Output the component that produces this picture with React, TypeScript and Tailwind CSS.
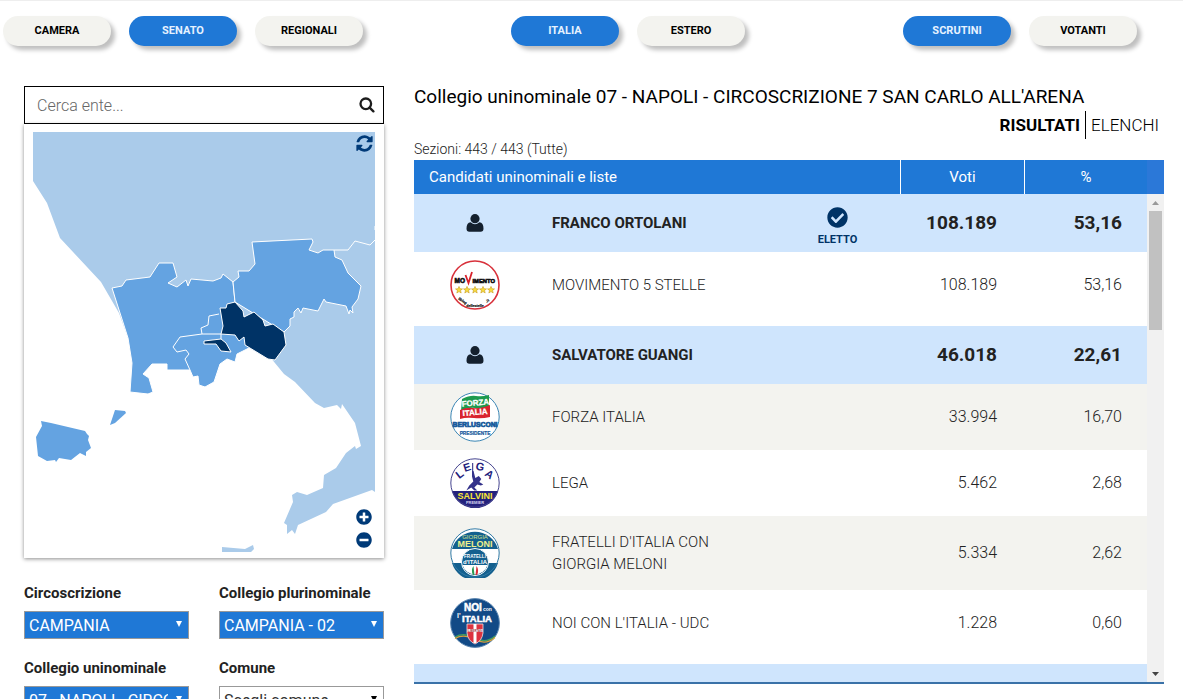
import { FaCheckCircle, FaMinusCircle, FaPlusCircle } from 'react-icons/fa';
import clsx from 'clsx';

const navGroups = [
  { name: 'Elezione', items: ['CAMERA', 'SENATO', 'REGIONALI'], active: 'SENATO' },
  { name: 'Area', items: ['ITALIA', 'ESTERO'], active: 'ITALIA' },
  { name: 'Dati', items: ['SCRUTINI', 'VOTANTI'], active: 'SCRUTINI' },
];

const filters = [
  { id: 'circoscrizione', label: 'Circoscrizione', value: 'CAMPANIA', filled: true },
  { id: 'plurinominale', label: 'Collegio plurinominale', value: 'CAMPANIA - 02', filled: true },
  { id: 'uninominale', label: 'Collegio uninominale', value: "07 - NAPOLI - CIRCOSCRIZIONE 7 SAN CARLO ALL'ARENA", filled: true },
  { id: 'comune', label: 'Comune', value: 'Scegli comune...', filled: false },
];

const candidates = [
  {
    name: 'FRANCO ORTOLANI',
    votes: '108.189',
    percent: '53,16',
    elected: true,
    lists: [{ name: 'MOVIMENTO 5 STELLE', votes: '108.189', percent: '53,16', Logo: MovimentoLogo }],
  },
  {
    name: 'SALVATORE GUANGI',
    votes: '46.018',
    percent: '22,61',
    elected: false,
    lists: [
      { name: 'FORZA ITALIA', votes: '33.994', percent: '16,70', Logo: ForzaItaliaLogo },
      { name: 'LEGA', votes: '5.462', percent: '2,68', Logo: LegaLogo },
      { name: "FRATELLI D'ITALIA CON GIORGIA MELONI", votes: '5.334', percent: '2,62', Logo: FratelliLogo },
      { name: "NOI CON L'ITALIA - UDC", votes: '1.228', percent: '0,60', Logo: NoiLogo },
    ],
  },
];

const logoClass = "mx-auto block size-[50px] font-['Liberation_Sans',sans-serif] font-bold";

function MovimentoLogo() {
  const star = '0,-3.6 1,-1.2 3.5,-1.1 1.5,0.5 2.2,3 0,1.6 -2.2,3 -1.5,0.5 -3.5,-1.1 -1,-1.2';
  return (
    <svg viewBox="0 0 50 50" className={logoClass} aria-hidden="true">
      <circle cx="25" cy="25" r="24" fill="#fff" stroke="#d8303a" strokeWidth="1.6" />
      <text x="4.500" y="22.500" fontSize="6.500" fill="#111" stroke="#111" strokeWidth="0.6">MO</text>
      <path d="M15.500 15l3 8 3.500-11" fill="none" stroke="#d8202a" strokeWidth="1.8" />
      <text x="22.500" y="22.500" fontSize="5.800" fill="#111" stroke="#111" strokeWidth="0.6">IMENTO</text>
      {[9, 17, 25, 33, 41].map((x) => (
        <polygon key={x} points={star} transform={`translate(${x} 30)`} fill="#f7dc3c" stroke="#c79a1c" strokeWidth="0.6" />
      ))}
      <g fontSize="3.600" fill="#111" stroke="#111" strokeWidth="0.2" textAnchor="middle">
        <text x="12.500" y="42" transform="rotate(34 12.500 41)">ilblog</text>
        <text x="25" y="46.500">dellestelle</text>
        <text x="37.500" y="42" transform="rotate(-36 37.500 41)">.it</text>
      </g>
    </svg>
  );
}

function ForzaItaliaLogo() {
  return (
    <svg viewBox="0 0 50 50" className={logoClass} aria-hidden="true">
      <circle cx="25" cy="25" r="24.2" fill="#fff" stroke="#3b86b5" strokeWidth="1" />
      <path d="M12 7q8-4 14-3t13-1v12q-8 2-14 1t-14 3z" fill="#1d9a4d" />
      <path d="M10 18q7-3 13-2t17-3v12q-8 2-16 1t-14 1z" fill="#d9232e" />
      <g textAnchor="middle" stroke="#fff" strokeWidth="0.3">
        <text x="25.500" y="13.500" fontSize="8" fill="#fff" transform="rotate(-5 25 12)">FORZA</text>
        <text x="25" y="23" fontSize="8" fill="#fff" transform="rotate(-5 25 20)">ITALIA</text>
      </g>
      <g textAnchor="middle" fill="#15599b" stroke="#15599b">
        <text x="25" y="35" fontSize="6.800" strokeWidth="0.7">BERLUSCONI</text>
        <text x="25" y="42.500" fontSize="4.800" strokeWidth="0.2">PRESIDENTE</text>
      </g>
    </svg>
  );
}

function LegaLogo() {
  return (
    <svg viewBox="0 0 50 50" className={logoClass} aria-hidden="true">
      <circle cx="25" cy="25" r="24.2" fill="#fff" />
      <path d="M1.8 33h46.4A24.2 24.2 0 0 1 1.8 33z" fill="#23217c" />
      <circle cx="25" cy="25" r="24.2" fill="none" stroke="#45448f" strokeWidth="1" />
      <g fontSize="11" fill="#23217c" textAnchor="middle">
        <text x="9.500" y="20" transform="rotate(-38 9.500 16)">L</text>
        <text x="17" y="13" transform="rotate(-18 17 9)">E</text>
        <text x="30" y="12.500" transform="rotate(14 30 9)">G</text>
        <text x="39.500" y="20" transform="rotate(36 39.500 16)">A</text>
      </g>
      <path d="M22.7 5v10" stroke="#23217c" strokeWidth="1" />
      <path d="M22 13l1.5 0 1.8 7 3.5-2 2.500 3-2 3 4 2.500-2.500 1-3.500-1-3 3 3 3h-3l-3-3-5 3 3-5 4-4-1.300-5z" fill="#34328a" />
      <text x="25" y="41.200" fontSize="9" fill="#f7e737" textAnchor="middle">SALVINI</text>
      <text x="25" y="46" fontSize="4" fill="#d6d6ef" textAnchor="middle">PREMIER</text>
    </svg>
  );
}

function FratelliLogo() {
  return (
    <svg viewBox="0 0 50 50" className={logoClass} aria-hidden="true">
      <circle cx="25" cy="25" r="24.2" fill="#fff" />
      <path d="M2 21a24 24 0 0 1 46 0z" fill="#14608f" />
      <path d="M2 35h46a24 24 0 0 1-46 0z" fill="#14608f" />
      <circle cx="25" cy="34" r="13.500" fill="#14608f" stroke="#fff" strokeWidth="1" />
      <path d="M12.500 37h25a13 13 0 0 1-25 0z" fill="#fff" />
      <circle cx="25" cy="25" r="24.2" fill="none" stroke="#317aa6" strokeWidth="1" />
      <g textAnchor="middle">
        <text x="25" y="10.500" fontSize="6" fontWeight="400" fill="#d3e28b">GIORGIA</text>
        <text x="25" y="18.500" fontSize="9" fill="#eef08b">MELONI</text>
        <text x="25" y="29.500" fontSize="4.600" fill="#fff">FRATELLI</text>
        <text x="25" y="35.500" fontSize="6" fill="#fff">d'ITALIA</text>
      </g>
      <path d="M23.500 38q-3 4-.5 9h1.500z" fill="#2b9a51" />
      <path d="M26.500 38q3 4 .5 9h-1.500z" fill="#d9303a" />
    </svg>
  );
}

function NoiLogo() {
  return (
    <svg viewBox="0 0 50 50" className={logoClass} aria-hidden="true">
      <circle cx="25" cy="25" r="24.4" fill="#124a86" stroke="#5d87b1" strokeWidth="1" />
      <g fill="#fff" textAnchor="middle" stroke="#fff" strokeWidth="0.5">
        <text x="23" y="13" fontSize="10">NOI</text>
        <text x="27" y="23.500" fontSize="9.500">ITALIA</text>
      </g>
      <text x="33" y="13" fontSize="5" fill="#fff">con</text>
      <text x="7" y="20" fontSize="7" fill="#fff">l'</text>
      <path d="M5 39q9-5 20 1t20-2" fill="none" stroke="#3fa160" strokeWidth="1.2" />
      <path d="M5 40.500q9-5 20 1t20-2" fill="none" stroke="#d8a13a" strokeWidth="1.2" />
      <path d="M17 26h16v9q-1 8-8 11-7-3-8-11z" fill="#dc3340" stroke="#f3dfe2" strokeWidth="0.8" />
      <path d="M25 26v19M17.500 32.500h15" stroke="#fff" strokeWidth="3" />
      <text x="25" y="33.600" fontSize="2.800" fill="#a12a35" textAnchor="middle">LIBERTAS</text>
    </svg>
  );
}

function UserIcon() {
  return (
    <svg viewBox="0 0 18 18" className="mx-auto block size-[18px]" fill="#14202e" aria-hidden="true">
      <circle cx="9" cy="4.700" r="4.600" />
      <path d="M4.600 8.300Q9 12.200 13.400 8.300Q17.500 8.700 17.500 14.600Q17.500 17.800 14.600 17.800H3.400Q.5 17.800.5 14.600Q.5 8.700 4.600 8.300z" />
    </svg>
  );
}

function RefreshIcon() {
  return (
    <svg viewBox="0 0 1792 1792" className="size-[19px]" fill="currentColor" aria-hidden="true">
      <path d="M1639 1056q0 5-1 7-64 268-268 434.500t-478 166.500q-146 0-282.500-55t-243.500-157l-129 129q-19 19-45 19t-45-19-19-45v-448q0-26 19-45t45-19h448q26 0 45 19t19 45-19 45l-137 137q71 66 161 102t187 36q134 0 250-65t186-179q11-17 53-117 8-23 30-23h192q13 0 22.500 9.500t9.500 22.500zm25-800v448q0 26-19 45t-45 19h-448q-26 0-45-19t-19-45 19-45l138-138q-148-137-349-137-134 0-250 65t-186 179q-11 17-53 117-8 23-30 23h-199q-13 0-22.500-9.500t-9.500-22.500v-7q65-268 270-434.500t480-166.500q146 0 284 55.500t245 156.500l130-129q19-19 45-19t45 19 19 45z" />
    </svg>
  );
}

function CollegeMap() {
  return (
    <svg viewBox="33 132 342 420" className="block w-full" role="img" aria-label="Mappa dei collegi">
      {/* rest of the region */}
      <g fill="#aacbea">
        <path d="M33 132H375V492L372 490 333 504 326 512 298 525 295 534 292 530 287 534 287 525 284 523 293 502 292 495 297 492 307 495 323 488 324 475 336 468 346 453 355 446 356 449 361 446 355 423 342 404 341 409 337 405 324 408 315 403 295 382 284 374 270 357 249 340 180 320 128 338 119 313 101 282 60 238 47 203 33 181z" />
        <path d="M222 547L245 549 253 545 254 549 251 552H222z" />
      </g>
      <g fill="#64a3e1">
        <path d="M41 421L51 423 85 431 87 434 89 436 88 440 91 448 86 452 86 456 80 453 71 460 59 458 56 462 55 460 47 461 38 456 36 437 42 426z" />
        <path d="M115 410L125 411 126 413 115 423 110 425z" />
      </g>
      <g fill="#64a3e1" stroke="#fff" strokeWidth="1" strokeLinejoin="round">
        <path d="M112 288L122 286 126 280 150 277 159 263 173 263 177 277 168 283 177 287 186 280 188 286 191 279 213 281 221 278 223 274 233 282 235 302 268 359 249 348 237 354 235 362 227 359 220 364 214 382 205 387 199 385 198 376 193 377 190 370H167V364H152L143 374 149 378 153 392 148 394 130 392 132 363 128 338z" />
        <path d="M233 282L239 277 238 271H249L255 264 252 242 312 239 313 242 309 250 318 253 323 250H334L335 257 342 260 348 273 361 286 358 299 352 307 353 313 350 310 349 314 346 306 326 302 324 299 318 311 303 308 301 313 298 308 294 312 294 317 290 319 290 326 284 332 235 302z" />
      </g>
      <g fill="none" stroke="#fff" strokeWidth="1" strokeLinejoin="round">
        <path d="M334 250H348L355 241 370 245 375 240M375 226v4" />
        <path d="M219 314L209 316 208 325 201 328 202 334 180 337 173 347 177 352 186 350 189 354 185 359 190 370" />
        <path d="M202 334L221 334V339" />
      </g>
      <g fill="#003366" stroke="#fff" strokeWidth="1" strokeLinejoin="round">
        <path d="M220 308L226 308 227 304 235 302 243 311 244 317 254 312 263 320 265 326 273 324 284 332 286 345 275 360 268 359 245 345 244 337 239 341 235 335 221 334 223 326z" />
        <path d="M204 341L221 339 226 343 231 352 221 351 216 344H204z" />
      </g>
    </svg>
  );
}

function Filter({ id, label, value, filled }: (typeof filters)[number]) {
  return (
    <div>
      <label htmlFor={id} className="block text-[15px] leading-6 font-bold text-[#222]">
        {label}
      </label>
      <div className="relative mt-[6px]">
        <select
          id={id}
          className={clsx(
            'block h-7 w-full appearance-none border border-[#999] pt-[2px] pr-5 pl-1 text-base leading-6',
            filled ? 'bg-[#1f78d6] text-white' : 'bg-white text-[#333]',
          )}
        >
          <option>{value}</option>
        </select>
        <svg
          viewBox="0 0 6 6"
          className={clsx('pointer-events-none absolute top-[10px] right-[7px] size-[6px]', filled ? 'text-white' : 'text-black')}
          fill="currentColor"
          aria-hidden="true"
        >
          <path d="M0 0h6L3 6z" />
        </svg>
      </div>
    </div>
  );
}

function ResultsTable() {
  return (
    <div className="flex h-[524px] overflow-hidden border-b-2 border-[#3a72a8]">
      <div className="min-w-0 flex-1">
        <table className="w-full table-fixed border-separate border-spacing-0 text-[#222]">
          <colgroup>
            <col className="w-[122px]" />
            <col />
            <col className="w-[125px]" />
            <col className="w-[124px]" />
            <col className="w-[123px]" />
          </colgroup>
          <thead className="bg-[#1f78d6] text-[15px] text-white">
            <tr className="h-[34px]">
              <th colSpan={3} className="pl-[15px] text-left font-normal">Candidati uninominali e liste</th>
              <th className="border-l border-white font-normal">Voti</th>
              <th className="border-l border-white font-normal">%</th>
            </tr>
          </thead>
          {candidates.map((candidate) => (
            <tbody key={candidate.name}>
              <tr className="h-[58px] bg-[#cfe5fd] font-bold">
                <td><UserIcon /></td>
                <td className="pl-4 text-[15px]">{candidate.name}</td>
                <td className="text-center text-[#003366]">
                  {candidate.elected && (
                    <>
                      <FaCheckCircle size={21} className="mx-auto mt-3" />
                      <span className="block text-[11px] leading-6">ELETTO</span>
                    </>
                  )}
                </td>
                <td className="pr-[27px] text-right text-[19px]">{candidate.votes}</td>
                <td className="pr-[25px] text-right text-[19px]">{candidate.percent}</td>
              </tr>
              {candidate.lists.map(({ name, votes, percent, Logo }, index) => {
                const last = index === candidate.lists.length - 1;
                return (
                  <tr
                    key={name}
                    className={clsx(
                      'font-light',
                      !last && index % 2 === 0 && 'bg-[#f3f3ef]',
                      last || name.length > 30 ? 'h-[74px]' : 'h-[66px]',
                      last && '*:pb-2',
                    )}
                  >
                    <td><Logo /></td>
                    <td className="pl-4 text-[15px] leading-[22px]"><span className="block max-w-48">{name}</span></td>
                    <td />
                    <td className="pr-[27px] text-right">{votes}</td>
                    <td className="pr-[25px] text-right">{percent}</td>
                  </tr>
                );
              })}
            </tbody>
          ))}
          <tbody>
            <tr className="h-[58px] bg-[#cfe5fd]"><td colSpan={5} /></tr>
          </tbody>
        </table>
      </div>
      <div className="flex w-[17px] flex-col bg-[#f1f1f1]">
        <div className="h-[34px] bg-[#2b78d8]" />
        <div className="flex flex-1 flex-col items-center justify-between">
          <div className="flex w-full flex-col items-center">
            <svg viewBox="0 0 7 4" className="mt-[7px] mb-[6px] h-1 w-[7px]" fill="#999" aria-hidden="true"><path d="M0 4h7L3.500 0z" /></svg>
            <div className="h-[119px] w-[13px] bg-[#c1c1c1]" />
          </div>
          <svg viewBox="0 0 7 4" className="mb-[6px] h-1 w-[7px]" fill="#444" aria-hidden="true"><path d="M0 0h7L3.500 4z" /></svg>
        </div>
      </div>
    </div>
  );
}

export default function App() {
  return (
    <div className="border-t border-[#eee] bg-white font-['Roboto',sans-serif] text-base text-[#222]">
      <nav className="grid grid-cols-[508fr_392fr_280fr] pt-[15px] pl-[3px]">
        {navGroups.map((group) => (
          <div key={group.name} role="group" aria-label={group.name} className="flex gap-[18px]">
            {group.items.map((item) => (
              <button
                key={item}
                type="button"
                className={clsx(
                  'h-[30px] w-[108px] rounded-full text-[11px] font-bold shadow-[4px_4px_4px_rgba(0,0,0,0.25)]',
                  item === group.active ? 'bg-[#1f78d6] text-[#e6f2ff]' : 'bg-[#f3f3ef] text-black',
                )}
              >
                {item}
              </button>
            ))}
          </div>
        ))}
      </nav>

      <main className="grid grid-cols-[360px_minmax(0,1fr)] gap-[30px] pt-10 pr-[19px] pl-6">
        <aside>
          <form role="search" className="flex h-[38px] items-center border border-black pr-2 pl-3">
            <input
              type="text"
              aria-label="Cerca ente"
              placeholder="Cerca ente..."
              className="min-w-0 flex-1 pt-[2px] font-light outline-none placeholder:text-[#666]"
            />
            <button type="submit" aria-label="Cerca">
              <svg viewBox="0 0 16 16" className="size-4" fill="none" stroke="#1c1c1c" strokeWidth="2.300" aria-hidden="true">
                <circle cx="6.800" cy="6.800" r="5.300" />
                <path d="M10.600 10.600l3.800 3.800" strokeLinecap="round" />
              </svg>
            </button>
          </form>
          <div className="relative px-[9px] pt-2 pb-[6px] shadow-[0_1px_4px_rgba(0,0,0,0.45)]">
            <CollegeMap />
            <button type="button" aria-label="Aggiorna" className="absolute top-[10px] right-[10px] text-[#003a78]">
              <RefreshIcon />
            </button>
            <div className="absolute right-3 bottom-[10px] flex flex-col gap-[7px] text-[#003a78]">
              <button type="button" aria-label="Ingrandisci"><FaPlusCircle size={16} /></button>
              <button type="button" aria-label="Riduci"><FaMinusCircle size={16} /></button>
            </div>
          </div>
          <div className="mt-[23px] grid grid-cols-2 gap-x-[30px] gap-y-[17px]">
            {filters.map((filter) => (
              <Filter key={filter.id} {...filter} />
            ))}
          </div>
        </aside>

        <section>
          <h1 className="text-[19px] leading-[22px] text-black">
            Collegio uninominale 07 - NAPOLI - CIRCOSCRIZIONE 7 SAN CARLO ALL'ARENA
          </h1>
          <div className="mt-[3px] flex justify-end pr-[5px] text-[17px] leading-7 text-black">
            <a href="#risultati" className="border-r border-black pr-[5px] font-bold">RISULTATI</a>
            <a href="#elenchi" className="pl-[5px] font-light">ELENCHI</a>
          </div>
          <p className="text-sm leading-[21px] font-light">Sezioni: 443 / 443 (Tutte)</p>
          <ResultsTable />
        </section>
      </main>
    </div>
  );
}
